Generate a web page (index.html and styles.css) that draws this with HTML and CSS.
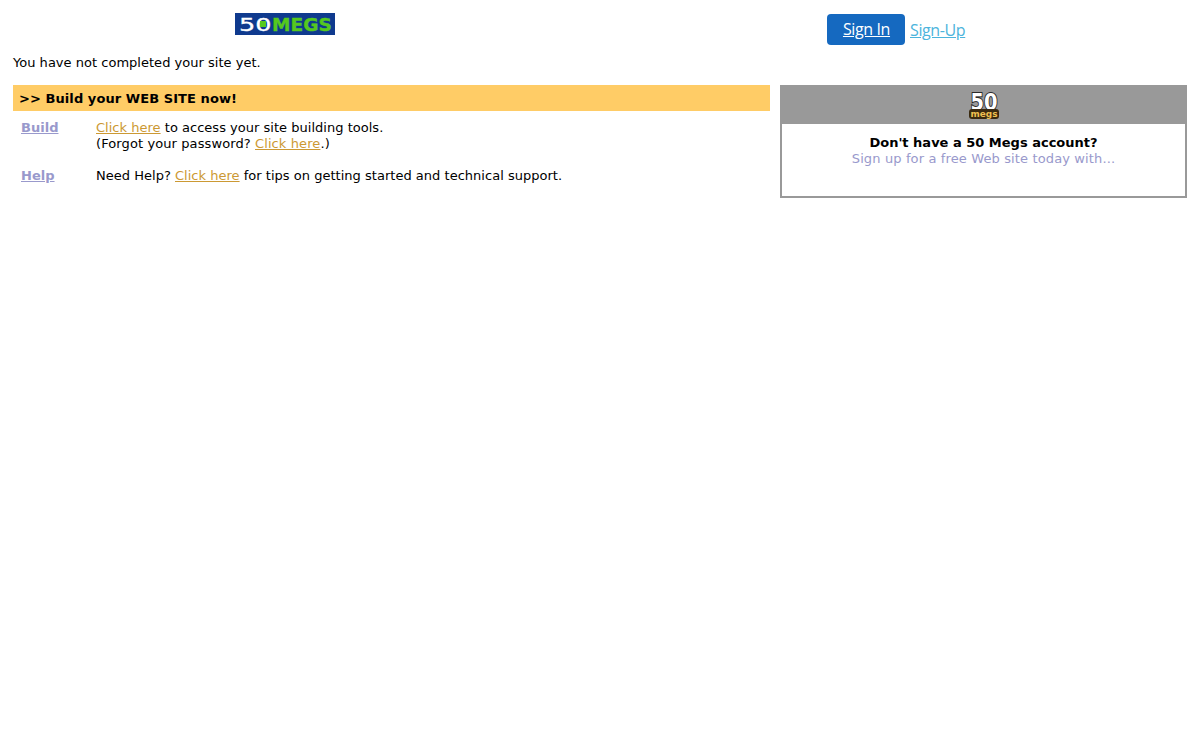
FILE: index.html
```html
<!DOCTYPE html>
<html lang="en">
<head>
<meta charset="utf-8">
<title>50 Megs</title>
<link rel="stylesheet" href="styles.css">
</head>
<body>
<header class="top">
  <svg class="logo" width="100" height="22" viewBox="0 0 100 22" role="img" aria-label="50 MEGS">
    <rect width="100" height="22" fill="#0f3a8e"/>
    <text transform="translate(4 17.5) scale(1.42 1)" class="logo-50">50</text>
    <rect x="25" y="8" width="6" height="6" fill="#55c81e"/>
    <text transform="translate(37 17.5) scale(1.03 1)" class="logo-megs">MEGS</text>
  </svg>
  <nav class="auth">
    <a class="btn" href="#">Sign In</a>
    <a class="signup" href="#">Sign-Up</a>
  </nav>
</header>
<p class="status">You have not completed your site yet.</p>
<main class="cols">
  <section class="build">
    <h2 class="build-title">&gt;&gt; Build your WEB SITE now!</h2>
    <div class="row">
      <a class="label" href="#">Build</a>
      <div><a class="link" href="#">Click here</a> to access your site building tools.<br><span class="wide">(Forgot your password? <a class="link" href="#">Click here</a>.)</span></div>
    </div>
    <div class="row">
      <a class="label" href="#">Help</a>
      <div>Need Help? <a class="link" href="#">Click here</a> for tips on getting started and technical support.</div>
    </div>
  </section>
  <aside class="promo">
    <div class="promo-head">
      <svg class="badge" width="36" height="39" viewBox="0 0 36 39" role="img" aria-label="50 megs">
        <text x="18" y="25" class="badge-50" textLength="27" lengthAdjust="spacingAndGlyphs">50</text>
        <rect x="3" y="24" width="30" height="10" rx="3" fill="#3a2a10"/>
        <text x="18" y="32" class="badge-megs" textLength="27" lengthAdjust="spacingAndGlyphs">megs</text>
      </svg>
    </div>
    <div class="promo-body">
      <strong class="promo-title">Don't have a 50 Megs account?</strong>
      <span class="promo-sub">Sign up for a free Web site today with...</span>
    </div>
  </aside>
</main>
</body>
</html>
```
FILE: styles.css
```css
* { box-sizing: border-box; }
body {
  margin: 0;
  padding: 13px 13px 0;
  background: #fff;
  color: #000;
  font: 13px/16px "DejaVu Sans", Verdana, sans-serif;
  letter-spacing: 0.02px;
}
.top {
  display: flex;
  align-items: flex-start;
  height: 33px;
}
.logo {
  display: block;
  margin-left: 222px;
}
.logo-50 {
  font: 400 18px "DejaVu Sans", sans-serif;
  fill: #fff;
  stroke: #fff;
  stroke-width: 0.3px;
}
.logo-megs {
  font: 700 18px "DejaVu Sans", sans-serif;
  fill: #55c81e;
  stroke: #55c81e;
  stroke-width: 0.4px;
}
.auth {
  display: flex;
  align-items: center;
  gap: 5px;
  margin: 1px 0 0 492px;
  font: 16px/24px "Open Sans", "Noto Sans", sans-serif;
  letter-spacing: -0.38px;
}
.btn {
  display: block;
  width: 78px;
  height: 31px;
  padding: 3px 0 0 1px;
  background: #1569c0;
  border-radius: 4px;
  color: #fff;
  text-align: center;
}
.signup { color: #4cb4dc; }
.status {
  margin: 9px 0 0;
  height: 30px;
}
.cols {
  display: flex;
  align-items: flex-start;
  gap: 10px;
}
.build { width: 757px; }
.build-title {
  margin: 0 0 9px;
  height: 26px;
  padding: 6px 5px 4px 6px;
  background: #fc6;
  font-size: 13px;
  line-height: 16px;
  font-weight: 700;
  letter-spacing: 0.07px;
}
.row {
  display: grid;
  grid-template-columns: 75px 1fr;
  padding-left: 8px;
  margin-bottom: 16px;
}
.wide { letter-spacing: 0.1px; }
.label {
  color: #99c;
  font-weight: 700;
}
.link { color: #c93; }
.promo {
  width: 407px;
  height: 113px;
  border: 2px solid #999;
  border-top: 0;
}
.promo-head {
  display: flex;
  justify-content: center;
  height: 39px;
  margin: 0 -2px;
  background: #999;
}
.badge { display: block; }
.badge-50 {
  font: 700 23px "DejaVu Sans", sans-serif;
  fill: #fff;
  stroke: #2a2a2a;
  stroke-width: 2px;
  paint-order: stroke;
  text-anchor: middle;
}
.badge-megs {
  font: 700 9px "DejaVu Sans", sans-serif;
  fill: #f0c050;
  text-anchor: middle;
}
.promo-body {
  display: flex;
  flex-direction: column;
  align-items: center;
  padding-top: 11px;
}
.promo-title { font-weight: 700; letter-spacing: 0; }
.promo-sub { color: #99c; letter-spacing: 0.13px; }
```
